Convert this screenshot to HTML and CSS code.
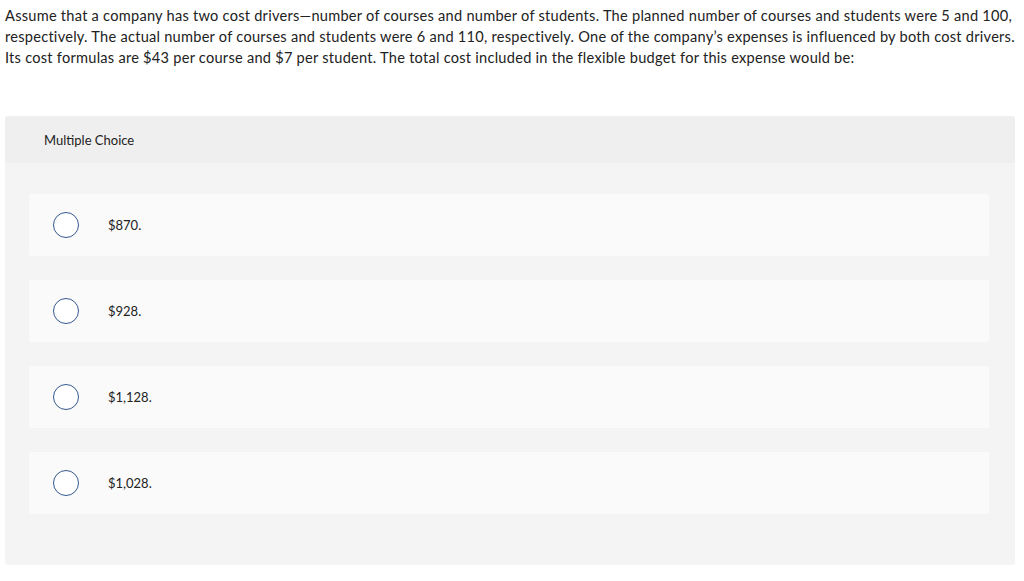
FILE: index.html
```html
<!DOCTYPE html>
<html>
<head>
<meta charset="utf-8">
<link rel="stylesheet" href="styles.css">
</head>
<body>
<div class="page">
  <p class="question">Assume that a company has two cost drivers—number of courses and number of students. The planned number of courses and students were 5 and 100, respectively. The actual number of courses and students were 6 and 110, respectively. One of the company’s expenses is influenced by both cost drivers. Its cost formulas are $43 per course and $7 per student. The total cost included in the flexible budget for this expense would be:</p>
  <div class="panel">
    <div class="panel-head">Multiple Choice</div>
    <div class="panel-body">
      <div class="option"><span class="radio"></span><span class="label">$870.</span></div>
      <div class="option"><span class="radio"></span><span class="label">$928.</span></div>
      <div class="option"><span class="radio"></span><span class="label">$1,128.</span></div>
      <div class="option"><span class="radio"></span><span class="label">$1,028.</span></div>
    </div>
  </div>
</div>
</body>
</html>
```

FILE: styles.css
```css
html, body {
  margin: 0;
  padding: 0;
  background: #ffffff;
}
body {
  font-family: "Lato", "Liberation Sans", sans-serif;
  color: #1a1a1a;
}
.page {
  padding: 5px 9px 0 5px;
}
.question {
  margin: 0 -3px 0 0;
  font-size: 14.6px;
  letter-spacing: 0.25px;
  line-height: 21px;
  color: #222;
}
.panel {
  margin-top: 48px;
  background: #f4f4f4;
  border-radius: 3px;
  overflow: hidden;
}
.panel-head {
  background: #efefef;
  height: 47px;
  display: flex;
  align-items: center;
  padding-left: 39px;
  font-size: 13px;
  color: #222;
}
.panel-body {
  padding: 31px 26px 51px 24px;
  display: flex;
  flex-direction: column;
  gap: 24px;
}
.option {
  height: 62px;
  background: #fafafa;
  border-radius: 3px;
  display: flex;
  align-items: center;
  padding-left: 24px;
}
.radio {
  width: 24px;
  height: 24px;
  border: 1px solid #34598f;
  border-radius: 50%;
  background: #fff;
  flex: none;
}
.label {
  margin-left: 29px;
  font-size: 13px;
  color: #222;
}
```
